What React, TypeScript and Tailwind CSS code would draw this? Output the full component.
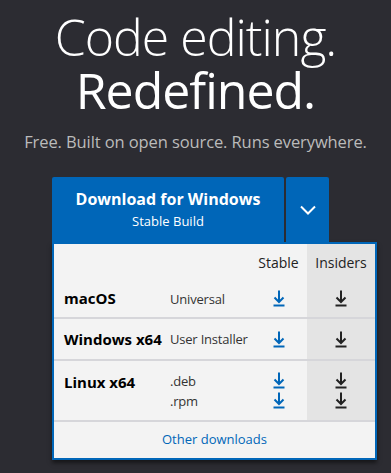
import React from "react";

const FONT = { fontFamily: '"Open Sans", "Noto Sans", sans-serif' };

const Arrow: React.FC<{ color: string }> = ({ color }) => (
  <svg width="12" height="17" viewBox="0 0 12 17" fill="none" stroke={color} strokeWidth="2">
    <path d="M6 0.5 V12" />
    <path d="M1.5 7.5 L6 12 L10.5 7.5" />
    <path d="M0.5 15.5 H11.5" />
  </svg>
);

const rows = [
  { os: "macOS", types: ["Universal"] },
  { os: "Windows x64", types: ["User Installer"] },
  { os: "Linux x64", types: [".deb", ".rpm"] },
];

const App: React.FC = () => {
  return (
    <div className="w-[391px] h-[473px] bg-[#2c2c32] overflow-hidden" style={FONT}>
      <div className="pt-[11px] text-center text-white">
        <h1 className="text-[50px] leading-[53px] font-light tracking-[-1px]">Code editing.</h1>
        <h1 className="text-[50px] leading-[53px] font-medium tracking-[-1px]">Redefined.</h1>
        <p className="mt-[14px] text-[16.5px] leading-[22px] text-[#bbbbbb] tracking-[-0.1px]">
          Free. Built on open source. Runs everywhere.
        </p>
      </div>

      <div className="ml-[52px] mt-[24px] w-[325px]">
        <div className="flex gap-[2px]">
          <div className="w-[232px] h-[65px] bg-[#0066b8] rounded-t-[2px] flex flex-col items-center justify-center text-white">
            <div className="text-[16px] leading-[20px] font-bold">Download for Windows</div>
            <div className="text-[13px] leading-[18px] mt-[3px]">Stable Build</div>
          </div>
          <div className="w-[43px] h-[65px] bg-[#0066b8] rounded-t-[2px] flex items-center justify-center">
            <svg width="16" height="10" viewBox="0 0 16 10" fill="none" stroke="white" strokeWidth="2">
              <path d="M1 1.5 L8 8.5 L15 1.5" />
            </svg>
          </div>
        </div>

        <div className="border-2 border-[#0066b8] bg-[#f3f3f3] shadow-[0_3px_4px_rgba(0,0,0,0.5)] text-[#222]">
          <div className="grid grid-cols-[116px_80px_57px_68px]">
            {/* header */}
            <div className="col-span-2 h-[36px]" />
            <div className="h-[36px] flex items-center justify-center text-[14px] text-[#222]">Stable</div>
            <div className="h-[36px] bg-[#e4e4e4] flex items-center justify-center text-[14px] text-[#222]">Insiders</div>

            {rows.map((r, i) => (
              <React.Fragment key={r.os}>
                <div className={`pl-[10px] flex text-[15px] font-bold text-black border-b-2 border-[#d6d6da] whitespace-nowrap ${i === 0 ? "h-[39px] items-center" : i === 1 ? "h-[42px] items-center" : "h-[61px] items-start pt-[10px]"}`}>
                  {r.os}
                </div>
                <div className="flex flex-col justify-center gap-[2px] text-[13px] leading-[18px] text-[#333] border-b-2 border-[#d6d6da] whitespace-nowrap tracking-[-0.2px]">
                  {r.types.map((t) => (
                    <div key={t}>{t}</div>
                  ))}
                </div>
                <div className="flex flex-col items-center justify-center gap-[3px] border-b-2 border-[#d6d6da]">
                  {r.types.map((t) => (
                    <Arrow key={t} color="#0066b8" />
                  ))}
                </div>
                <div className="flex flex-col items-center justify-center gap-[3px] bg-[#e4e4e4] border-b-2 border-[#d6d6da]">
                  {r.types.map((t) => (
                    <Arrow key={t} color="#222" />
                  ))}
                </div>
              </React.Fragment>
            ))}
          </div>
          <div className="h-[36px] flex items-center justify-center text-[13px] text-[#0066b8]">
            Other downloads
          </div>
        </div>
      </div>
    </div>
  );
};

export default App;
